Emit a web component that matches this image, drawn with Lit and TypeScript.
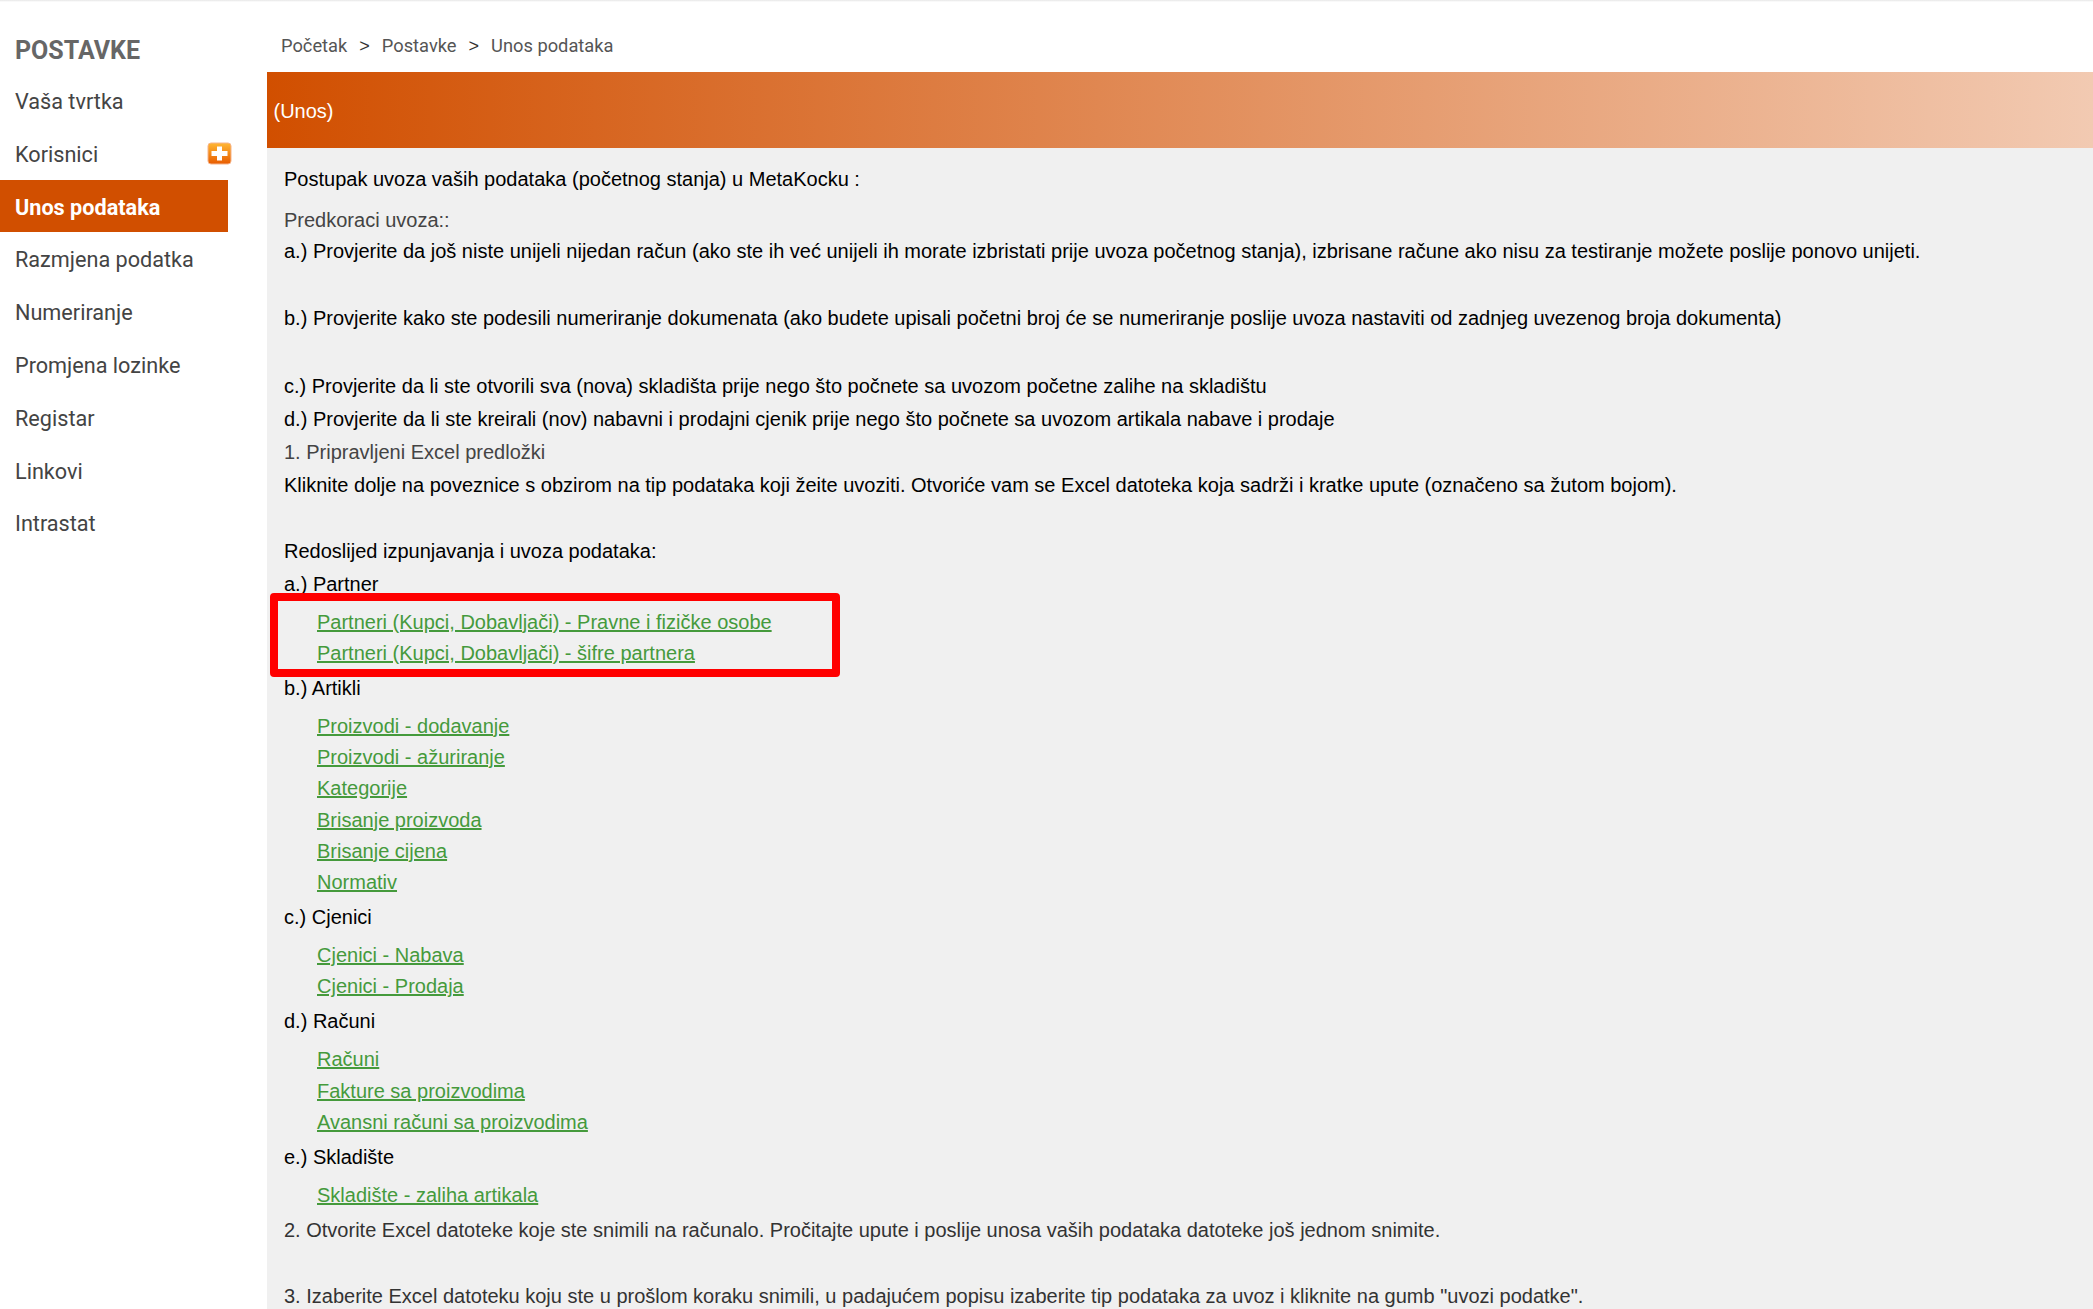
import { LitElement, html, css } from "lit";
import { customElement } from "lit/decorators.js";

const NAV = ["Vaša tvrtka", "Korisnici", "Unos podataka", "Razmjena podatka", "Numeriranje", "Promjena lozinke", "Registar", "Linkovi", "Intrastat"];
const SECTIONS: [string, string[]][] = [
  ["a.) Partner", ["Partneri (Kupci, Dobavljači) - Pravne i fizičke osobe", "Partneri (Kupci, Dobavljači) - šifre partnera"]],
  ["b.) Artikli", ["Proizvodi - dodavanje", "Proizvodi - ažuriranje", "Kategorije", "Brisanje proizvoda", "Brisanje cijena", "Normativ"]],
  ["c.) Cjenici", ["Cjenici - Nabava", "Cjenici - Prodaja"]],
  ["d.) Računi", ["Računi", "Fakture sa proizvodima", "Avansni računi sa proizvodima"]],
  ["e.) Skladište", ["Skladište - zaliha artikala"]],
];

@customElement("app-root")
export class AppRoot extends LitElement {
  static styles = css`
    :host { display: block; height: 1309px; overflow: hidden; background: #fff; position: relative; }
    :host::before { content: ""; position: absolute; inset: 0 0 auto 0; height: 2px; background: linear-gradient(#e6e6e6, #fff); }
    .page { display: flex; height: 100%; align-items: stretch; }
    .side { width: 267px; flex: none; padding-top: 33px; box-sizing: border-box; font-family: Roboto, sans-serif; }
    .side h2 { margin: 0 0 0 15px; font-size: 25px; line-height: 35px; font-weight: 700; color: #666; }
    .nav { list-style: none; margin: 6px 0 0; padding: 0; width: 228px; }
    .nav li { position: relative; height: 52.8px; line-height: 56px; padding-left: 15px; font-size: 21.65px; color: #444; }
    .nav li.on { background: #d14f00; color: #fff; font-weight: 700; }
    .plus { position: absolute; left: 207px; top: 15px; width: 25px; height: 23px; }
    .main { flex: 1; min-width: 0; display: flex; flex-direction: column; }
    .crumbs { height: 72px; flex: none; box-sizing: border-box; padding: 31px 0 0 14px; display: flex; gap: 12px; font-family: Roboto, sans-serif; font-size: 18.3px; line-height: 30px; color: #555; }
    .crumbs span.sep { color: #333; font-family: "Liberation Sans", sans-serif; font-size: 18px; }
    .band { height: 76px; flex: none; box-sizing: border-box; padding-left: 6.5px; line-height: 79px; font-family: "Liberation Sans", sans-serif; font-size: 20px; color: #fff; background: linear-gradient(90deg, #d14f00, #f2cab2); }
    .body { flex: 1; background: #f0f0f0; padding: 15px 0 0 17px; font-family: "Liberation Sans", sans-serif; font-size: 20px; color: #000; }
    .line { line-height: 33px; min-height: 33px; }
    .line.sub { color: #444; line-height: 28.7px; min-height: 28.7px; margin-top: 10.3px; }
    .line.gap-b { margin-top: 1px; }
    .line.gap-c { margin-top: 1.5px; }
    .line.head { color: #444; }
    .line.dim { color: #333; }
    ul.links { list-style: none; position: relative; margin: 6px 0 2.5px; padding: 0 0 0 33px; }
    ul.links li { line-height: 31.33px; height: 31.33px; }
    ul.links a { color: #459a3c; text-decoration: underline; text-decoration-thickness: 2px; }
    .mark { position: absolute; left: -14px; top: -14px; width: 570px; height: 84px; box-sizing: border-box; border: 8px solid #f00; border-radius: 4px; }
  `;

  render() {
    return html`<div class="page">
      <aside class="side">
        <h2>POSTAVKE</h2>
        <ul class="nav">
          ${NAV.map((n) => html`<li class=${n === "Unos podataka" ? "on" : ""}>${n}${n === "Korisnici" ? html`<svg class="plus" viewBox="0 0 25 23">
            <defs><linearGradient id="g" x1="0" y1="0" x2="0" y2="1"><stop offset="0" stop-color="#ffb733"/><stop offset="1" stop-color="#e85c00"/></linearGradient></defs>
            <rect x="1" y="1" width="23" height="21" rx="3" fill="url(#g)" stroke="#f6b48a"/>
            <path d="M10 4.500h5v4.500h5.500v5h-5.500v4.500h-5v-4.500h-5.500v-5h5.500z" fill="#fff"/></svg>` : ""}</li>`)}
        </ul>
      </aside>
      <main class="main">
        <nav class="crumbs"><span>Početak</span><span class="sep">&gt;</span><span>Postavke</span><span class="sep">&gt;</span><span>Unos podataka</span></nav>
        <div class="band">(Unos)</div>
        <div class="body">
          <div class="line">Postupak uvoza vaših podataka (početnog stanja) u MetaKocku :</div>
          <div class="line sub">Predkoraci uvoza::</div>
          <div class="line">a.) Provjerite da još niste unijeli nijedan račun (ako ste ih već unijeli ih morate izbristati prije uvoza početnog stanja), izbrisane račune ako nisu za testiranje možete poslije ponovo unijeti.</div>
          <div class="line"></div>
          <div class="line gap-b">b.) Provjerite kako ste podesili numeriranje dokumenata (ako budete upisali početni broj će se numeriranje poslije uvoza nastaviti od zadnjeg uvezenog broja dokumenta)</div>
          <div class="line"></div>
          <div class="line gap-c">c.) Provjerite da li ste otvorili sva (nova) skladišta prije nego što počnete sa uvozom početne zalihe na skladištu</div>
          <div class="line">d.) Provjerite da li ste kreirali (nov) nabavni i prodajni cjenik prije nego što počnete sa uvozom artikala nabave i prodaje</div>
          <div class="line head">1. Pripravljeni Excel predložki</div>
          <div class="line">Kliknite dolje na poveznice s obzirom na tip podataka koji žeite uvoziti. Otvoriće vam se Excel datoteka koja sadrži i kratke upute (označeno sa žutom bojom).</div>
          <div class="line"></div>
          <div class="line">Redoslijed izpunjavanja i uvoza podataka:</div>
          ${SECTIONS.map(([t, links], i) => html`<div class="line">${t}</div>
            <ul class="links">${i === 0 ? html`<div class="mark"></div>` : ""}${links.map((l) => html`<li><a href="#">${l}</a></li>`)}</ul>`)}
          <div class="line dim">2. Otvorite Excel datoteke koje ste snimili na računalo. Pročitajte upute i poslije unosa vaših podataka datoteke još jednom snimite.</div>
          <div class="line"></div>
          <div class="line dim">3. Izaberite Excel datoteku koju ste u prošlom koraku snimili, u padajućem popisu izaberite tip podataka za uvoz i kliknite na gumb "uvozi podatke".</div>
        </div>
      </main>
    </div>`;
  }
}
